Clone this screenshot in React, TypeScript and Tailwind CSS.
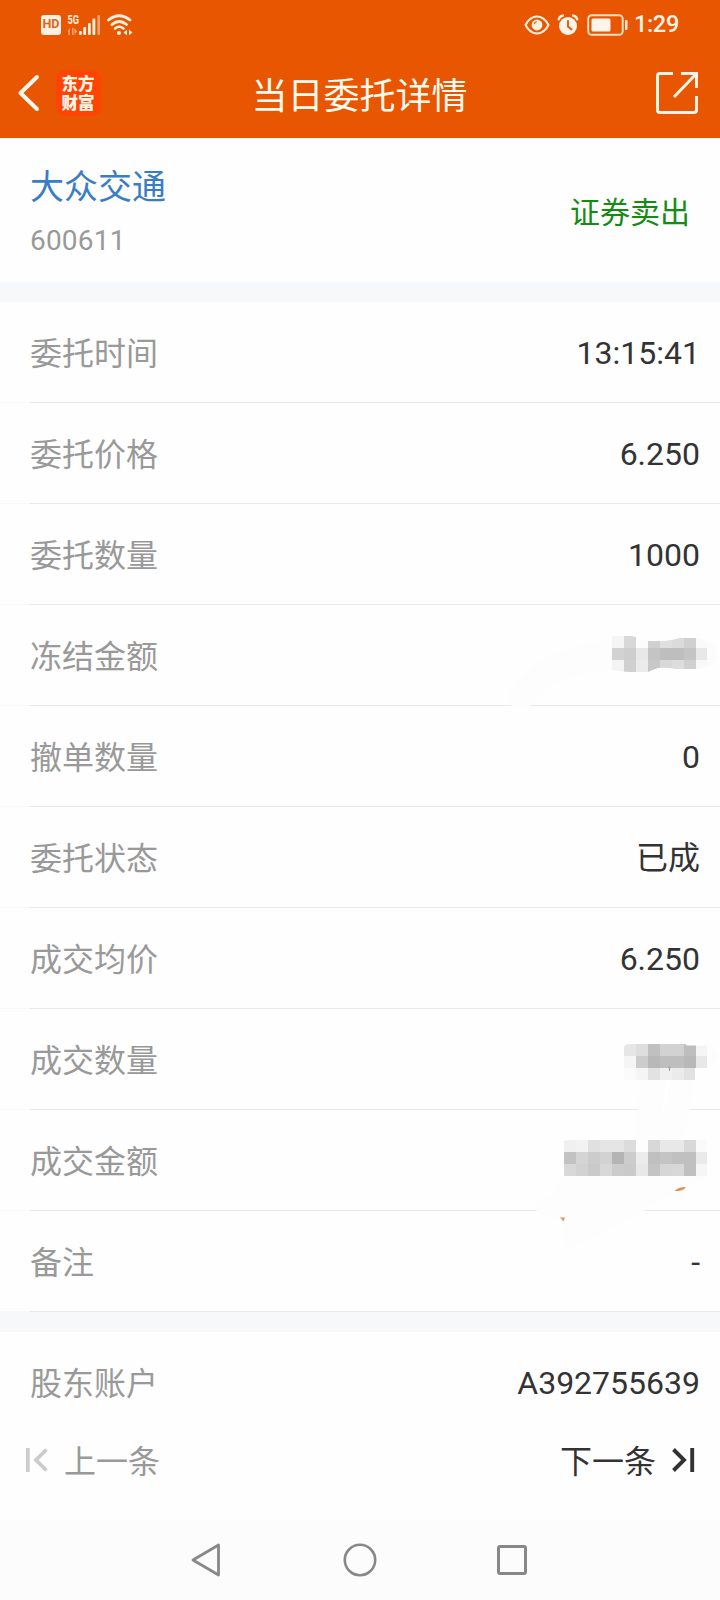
interface DetailRow {
  label: string;
  value: string;
}

interface MosaicProps {
  x: number;
  y: number;
  rows: string[];
}

const DETAILS: DetailRow[] = [
  { label: "委托时间", value: "13:15:41" },
  { label: "委托价格", value: "6.250" },
  { label: "委托数量", value: "1000" },
  { label: "冻结金额", value: "" },
  { label: "撤单数量", value: "0" },
  { label: "委托状态", value: "已成" },
  { label: "成交均价", value: "6.250" },
  { label: "成交数量", value: "" },
  { label: "成交金额", value: "" },
  { label: "备注", value: "-" },
];

const CELL = 12;

// each pair of hex digits is the grey level of one cell
const FROZEN = ["f5d8fcd0dfdbd0fa", "d2cee8c4bebec4e8", "f4d0ebc8d8ddd0f8"];
const QUANTITY = ["e6dec0d2d2bef5", "f5ccb8bebeb8e8", "fbf5e2f0ebe2fe"];
const AMOUNT = [
  "f0f2e0e5e5dcfdd8e8e8d8fa",
  "c2d4ccd2b4ccecc0c4c0c0ea",
  "d8d2cad8cccae8c4d6d8c0f6",
];

function Mosaic({ x, y, rows }: MosaicProps) {
  return (
    <g shapeRendering="crispEdges">
      {rows.map((row, r) =>
        (row.match(/../g) ?? []).map((grey, c) => (
          <rect
            key={`${r}-${c}`}
            x={x + c * CELL}
            y={y + r * CELL}
            width={CELL}
            height={CELL}
            fill={`#${grey}${grey}${grey}`}
          />
        ))
      )}
    </g>
  );
}

/* Hand-smeared privacy mask, drawn over the list */
function PrivacyMask() {
  return (
    <svg viewBox="0 302 720 1010" className="pointer-events-none absolute inset-0 h-[1010px] w-[720px]">
      <defs>
        <clipPath id="frozen">
          <path d="M612 636h20q5 1 8 3q5 2 10 2h15q8-1 15-3h16q11 1 11 8v18q-2 5-11 5h-20q-10-2-18-1q-6 2-10 4h-18q-10 0-18-2z" />
        </clipPath>
        <clipPath id="quantity">
          <path d="M624 1047q1-3 4-3h57l2 1.500h20v22.500h-12v12h-71z" />
        </clipPath>
        <clipPath id="amount">
          <path d="M564 1141l5-1h138v36H564z" />
        </clipPath>
      </defs>
      <path d="M514 707q-7-3-5-13q6-11 28-30q28-20 75-24v30q-50 3-66 20q-12 13-18 17z" fill="#fdfdfd" />
      <path d="M707 640q10 5 10 14t-10 14z" fill="#fcfcfc" />
      <g clipPath="url(#frozen)">
        <Mosaic x={612} y={636} rows={FROZEN} />
      </g>
      <path d="M641 1080h54l-12 62h-50z" fill="#fdfdfd" />
      <path d="M667 1076l3 4-5 28-3 2z" fill="#ffffff" />
      <path d="M707 1046q11 2 11 10t-11 10z" fill="#fcfcfc" />
      <g clipPath="url(#quantity)">
        <Mosaic x={624} y={1044} rows={QUANTITY} />
      </g>
      <path d="M669 1067h1l-.5 4z" stroke="#888" strokeWidth={0.6} fill="none" />
      <path d="M564 1176h142q-4 6-24 12l-37 22l-70 36q-11 4-11-6v-24q-18 5-28-6v-10l14-3z" fill="#fdfdfd" />
      <g clipPath="url(#amount)">
        <Mosaic x={564} y={1140} rows={AMOUNT} />
      </g>
      <path d="M674.500 1190.800q4-4 11.500-3.800q-3 4.500-11.500 3.800z" fill="#dc8f58" />
      <path d="M560 1217.500h5l-1.500 4z" fill="#d99660" />
    </svg>
  );
}

function StatusBar() {
  return (
    <div className="flex h-12 items-center px-[41px] pt-px text-[#fff3e6]">
      <div className="flex h-5 w-5 items-center justify-center rounded-[3px] bg-[#fff0e2] font-[Roboto] text-[12.5px] font-bold leading-none text-[#dc661c]">
        HD
      </div>
      <svg viewBox="0 0 34 24" className="ml-[6px] h-6 w-[34px]">
        <text x={0.500} y={10.500} fontFamily="Roboto" fontSize={12.800} fontWeight={700} textLength={11.500} lengthAdjust="spacingAndGlyphs" fill="#fff0df">5G</text>
        <g fill="#f6a577">
          <path d="M2.800 15v7H1.300v-3.500H.5zM5 15h1.500v7H5zM7.500 15l2.500 3.500-2.500 3.500z" />
          <rect x={30.500} y={2} width={2.500} height={20} rx={1} />
        </g>
        <g fill="#fff0df">
          <rect x={12} y={18} width={2.800} height={4} rx={1} />
          <rect x={16.300} y={14} width={2.800} height={8} rx={1} />
          <rect x={21} y={10} width={2.800} height={12} rx={1} />
          <rect x={25.500} y={5.500} width={2.800} height={16.500} rx={1} />
        </g>
      </svg>
      <svg viewBox="0 0 28 24" className="ml-[5px] h-6 w-7" fill="none" stroke="#fff0df" strokeLinecap="round">
        <path d="M2.500 7Q13 -1.500 24 7M6 11.500Q13 5.500 20.500 11.500" strokeWidth={2.800} />
        <path d="M9 15.500Q13 12 17.500 15.500" strokeWidth={2.600} />
        <circle cx={13} cy={20} r={2} fill="#fff0df" stroke="none" />
        <path d="M17.500 19.500l3.500-2.700v5.400zM26.500 19.500l-3.500-2.700v5.400z" fill="#fff0df" stroke="none" />
      </svg>

      <svg viewBox="0 0 26 22" className="ml-auto h-[22px] w-[26px]" fill="none" stroke="#fff0df">
        <path d="M1.500 11Q6 2.500 13 2.500T24.500 11Q20 19.500 13 19.500T1.500 11z" strokeWidth={2.100} strokeLinejoin="round" />
        <circle cx={13} cy={11} r={5.400} fill="#fff0df" stroke="none" />
        <path d="M10.300 10q.4-2 2.400-2.300" stroke="#e95602" strokeWidth={1.200} />
      </svg>
      <svg viewBox="0 0 22 22" className="ml-[7px] h-[22px] w-[22px]">
        <circle cx={11} cy={12} r={9} fill="#fff4ea" />
        <path d="M1.800 5.200Q2.500 2.300 5.800 1.600M20.200 5.200Q19.500 2.300 16.200 1.600" stroke="#fff0df" strokeWidth={2.500} fill="none" strokeLinecap="round" />
        <path d="M11 7v5.500l3.500 3" stroke="#e95602" strokeWidth={1.900} fill="none" strokeLinecap="round" />
      </svg>
      <svg viewBox="0 0 42 22" className="ml-2 h-[22px] w-[42px]">
        <rect x={1.200} y={1.200} width={34.500} height={19.600} rx={3.500} fill="none" stroke="#ffdfc6" strokeWidth={1.900} />
        <rect x={4.500} y={4.500} width={19} height={13} rx={1.500} fill="#fff4ea" />
        <path d="M38 6h1.500q1 0 1 1v8q0 1-1 1H38z" fill="#ffe7d3" />
      </svg>
      <span className="ml-[5px] pt-px font-[Roboto] text-[23.500px] font-medium leading-none tracking-[-0.3px]">1:29</span>
    </div>
  );
}

function TitleBar() {
  return (
    <div className="grid h-[90px] grid-cols-[1fr_auto_1fr] items-center pl-[17px] pr-[21px]">
      <div className="flex items-center">
        <svg viewBox="0 0 24 38" className="h-[38px] w-6" fill="none" stroke="#fff6ec" strokeWidth={4} strokeLinecap="round" strokeLinejoin="round">
          <path d="M20 3L3.500 19L20 35" />
        </svg>
        <div className="ml-[15px] flex h-[46px] w-[45px] items-center justify-center rounded-[9px] bg-[#fd4402]">
          <span className="w-[34px] break-all font-['Noto_Sans_CJK_SC',sans-serif] text-[16.500px] font-black leading-[19px] text-[#fff4e8]">
            东方财富
          </span>
        </div>
      </div>
      <h1 className="pl-[3px] pt-[7px] text-[36px] leading-none text-[#fffaf0]">当日委托详情</h1>
      <svg viewBox="0 0 44 44" className="h-11 w-11 justify-self-end" fill="none" stroke="#fff4e6" strokeWidth={3}>
        <path d="M18 2.500H5Q2.500 2.500 2.500 5V39Q2.500 41.500 5 41.500H39Q41.500 41.500 41.500 39V25" />
        <path d="M26 2.500H41.500V17M41 3L19 26" />
      </svg>
    </div>
  );
}

function SystemNav() {
  return (
    <nav className="flex h-20 items-center bg-[#fcfcfc] pl-[191px]">
      <svg viewBox="0 0 30 36" className="h-9 w-[30px]" fill="none" stroke="#888" strokeWidth={2.800} strokeLinejoin="round">
        <path d="M27.500 3v30L2 18z" />
      </svg>
      <svg viewBox="0 0 34 34" className="ml-[122px] h-[34px] w-[34px]" fill="none" stroke="#888" strokeWidth={2.600}>
        <circle cx={17} cy={17} r={15.200} />
      </svg>
      <div className="ml-[120px] h-[30px] w-[30px] rounded-[3px] border-[3px] border-[#888]" />
    </nav>
  );
}

export default function App() {
  return (
    <div className="h-[1600px] w-[720px] overflow-hidden bg-[#fefefe] font-[Roboto,'Noto_Sans_CJK_SC',sans-serif] text-[#333]">
      <header className="bg-[#e95602]">
        <StatusBar />
        <TitleBar />
      </header>

      <section className="flex h-36 items-center justify-between px-[30px] pt-[5px]">
        <div className="flex flex-col">
          <span className="text-[34px] leading-[48px] text-[#3a7dc5]">大众交通</span>
          <span className="mt-2 text-[28px] leading-[44px] tracking-[0.2px] text-[#999]">600611</span>
        </div>
        <span className="text-[30px] leading-none text-[#148c14]">证券卖出</span>
      </section>

      <div className="h-5 bg-[#f6f8fa]" />

      <section className="relative">
        {DETAILS.map((row) => (
          <div key={row.label} className="flex h-[101px]">
            <div className="w-[30px] border-b border-[#f8f8f8]" />
            <div className="flex flex-1 items-center justify-between border-b border-[#e9e9eb] pr-5 text-[32px]">
              <span className="pt-[3px] text-[#999]">{row.label}</span>
              <span className="pt-[2px]">{row.value}</span>
            </div>
          </div>
        ))}
        <PrivacyMask />
      </section>

      <div className="h-5 bg-[#f6f8fa]" />

      <div className="flex h-[101px] items-center justify-between pl-[30px] pr-5 text-[32px]">
        <span className="pt-[2px] text-[#999]">股东账户</span>
        <span>A392755639</span>
      </div>

      <footer className="flex h-[87px] items-start justify-between pl-[25px] pr-[24px] text-[32px] leading-[54px]">
        <div className="flex items-center text-[#999]">
          <svg viewBox="0 0 24 24" className="h-6 w-6" fill="none" stroke="#ccc" strokeWidth={3.800}>
            <path d="M2.800 0v24M21.500 1.500L11 12l10.500 10.500" />
          </svg>
          <span className="relative top-[2px] ml-[15px]">上一条</span>
        </div>
        <div className="flex items-center">
          <span className="relative top-[2px]">下一条</span>
          <svg viewBox="0 0 24 24" className="ml-4 h-6 w-6" fill="none" stroke="#333" strokeWidth={3.900}>
            <path d="M20.200 0v24M1.500 1.500L12 12L1.500 22.500" />
          </svg>
        </div>
      </footer>

      <SystemNav />
    </div>
  );
}
